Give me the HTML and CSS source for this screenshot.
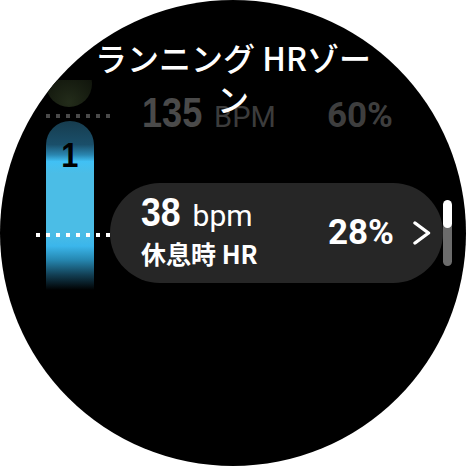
FILE: index.html
```html
<!DOCTYPE html>
<html lang="ja">
<head>
<meta charset="utf-8">
<title>ランニング HRゾーン</title>
<link rel="stylesheet" href="styles.css">
</head>
<body>
<div class="watch">
  <div class="body">
    <div class="graph">
      <div class="zone-prev"></div>
      <div class="dots dots-dim"></div>
      <div class="zone-bar"><span class="zone-num">1</span></div>
      <div class="dots dots-active"></div>
    </div>
    <div class="list">
      <div class="row-dim">
        <span class="num-dim">135</span>
        <span class="unit-dim">BPM</span>
        <span class="pct-dim">60%</span>
      </div>
      <div class="card">
        <div class="card-left">
          <div class="value-line"><span class="num">38</span><span class="unit">bpm</span></div>
          <div class="label">休息時 HR</div>
        </div>
        <span class="pct">28%</span>
        <svg class="chevron" width="18" height="24" viewBox="0 0 18 24"><path d="M2 2 L15.5 12 L2 22" fill="none" stroke="#fff" stroke-width="3.4" stroke-linecap="round" stroke-linejoin="round"/></svg>
      </div>
    </div>
  </div>
  <h1 class="title">ランニング HRゾーン</h1>
  <div class="scrollbar"><div class="scroll-thumb"></div></div>
</div>
</body>
</html>
```
FILE: styles.css
```css
html, body {
  margin: 0;
  padding: 0;
  background: #fff;
}
.watch {
  position: relative;
  width: 466px;
  height: 466px;
  border-radius: 50%;
  background: #000;
  overflow: hidden;
  font-family: Roboto, "Noto Sans CJK JP", sans-serif;
  color: #fff;
}
.title {
  position: absolute;
  top: 37px;
  left: 91px;
  width: 284px;
  margin: 0;
  text-align: center;
  font-family: "Noto Sans CJK JP", sans-serif;
  font-weight: 500;
  font-size: 32px;
  line-height: 41px;
  color: #fff;
}
.body {
  margin-top: 80px;
  height: 386px;
  overflow: hidden;
  display: flex;
  padding-left: 46px;
}
.graph {
  position: relative;
  width: 64px;
  flex: none;
  display: flex;
  flex-direction: column;
}
.zone-prev {
  width: 46px;
  height: 46px;
  margin-top: -19px;
  border-radius: 50%;
  background: radial-gradient(circle at 50% 90%, #232c1a 0%, #161c10 45%, #080a05 100%);
}
.dots {
  height: 4px;
  background: repeating-linear-gradient(to right, var(--dot) 0 4px, transparent 4px 10px);
}
.dots-dim {
  --dot: #4a4a4a;
  margin-top: 7px;
  width: 64px;
}
.zone-bar {
  margin-top: 3px;
  width: 48px;
  height: 169px;
  border-radius: 24px 24px 0 0;
  background: linear-gradient(to bottom,
    #163c4e 0%, #1a4f6a 14%, #2a86b0 20%, #41c1f5 24%, #4bbde6 31%,
    #4bbde6 66%, #3bb6eb 74%, #2688b2 82%, #123f54 91%, #000 100%);
  display: flex;
  justify-content: center;
}
.zone-num {
  font-family: "Liberation Sans", sans-serif;
  font-weight: 700;
  font-size: 35px;
  line-height: 35px;
  margin-top: 16px;
  color: #000;
  display: inline-block;
  transform: scaleX(0.88);
}
.dots-active {
  --dot: #fff;
  position: absolute;
  left: -10px;
  top: 153px;
  width: 74px;
}
.list {
  width: 333px;
  flex: none;
  display: flex;
  flex-direction: column;
}
.row-dim {
  margin-top: 12px;
  height: 42px;
  display: flex;
  align-items: baseline;
  padding: 0 50px 0 32px;
}
.num-dim {
  font-family: "Liberation Sans", sans-serif;
  font-weight: 700;
  font-size: 42px;
  line-height: 42px;
  color: #4a4a4a;
  display: inline-block;
  transform: scaleX(0.86);
  transform-origin: 0 50%;
  margin-right: -10px;
}
.unit-dim {
  font-size: 29px;
  margin-left: 12px;
  color: #3c3c3c;
}
.pct-dim {
  margin-left: auto;
  font-weight: 700;
  font-size: 35px;
  color: #3e3e3e;
}
.card {
  margin-top: 49px;
  height: 100px;
  border-radius: 50px;
  background: #262626;
  display: flex;
  align-items: center;
  padding: 0 12px 0 31px;
  box-sizing: border-box;
}
.card-left {
  flex: 1;
  display: flex;
  flex-direction: column;
  margin-bottom: 7px;
}
.value-line {
  display: flex;
  align-items: baseline;
  height: 41px;
}
.num {
  font-family: "Liberation Sans", sans-serif;
  font-weight: 700;
  font-size: 41px;
  line-height: 41px;
  display: inline-block;
  transform: scaleX(0.87);
  transform-origin: 0 50%;
  margin-right: -6px;
}
.unit {
  font-size: 30px;
  margin-left: 12px;
}
.label {
  margin-top: 6px;
  font-family: "Noto Sans CJK JP", sans-serif;
  font-weight: 700;
  font-size: 25px;
  line-height: 28px;
}
.pct {
  font-weight: 700;
  font-size: 35px;
  line-height: 40px;
}
.chevron {
  margin-left: 19px;
  flex: none;
}
.scrollbar {
  position: absolute;
  left: 443px;
  top: 200px;
  width: 9px;
  height: 66px;
  border-radius: 5px;
  background: #6c6c6c;
  overflow: hidden;
}
.scroll-thumb {
  height: 28px;
  border-radius: 5px;
  background: #fff;
}
```
